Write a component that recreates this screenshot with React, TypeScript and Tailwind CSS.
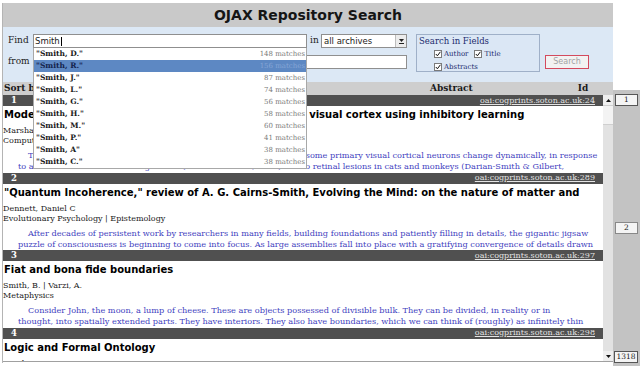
import React from "react";

const serif = "font-['DejaVu_Serif',serif]";
const sans = "font-['DejaVu_Sans',sans-serif]";

const suggestions = [
  { name: '"Smith, D."', count: "148 matches" },
  { name: '"Smith, R."', count: "156 matches", active: true },
  { name: '"Smith, J."', count: "87 matches" },
  { name: '"Smith, L."', count: "74 matches" },
  { name: '"Smith, G."', count: "56 matches" },
  { name: '"Smith, H."', count: "58 matches" },
  { name: '"Smith, M."', count: "60 matches" },
  { name: '"Smith, P."', count: "41 matches" },
  { name: '"Smith, A"', count: "38 matches" },
  { name: '"Smith, C."', count: "38 matches" },
];

const records = [
  {
    n: 1,
    id: "oai:cogprints.soton.ac.uk:24",
    title: "Modelling receptive field plasticity in mature primary visual cortex using inhibitory learning",
    authors: "Marshall, Jonathan A. | Kalarickal, George J.",
    subjects: "Computational Neuroscience | Neural Nets",
    l1: "The receptive field properties of many neurons, including those of some primary visual cortical neurons change dynamically, in response",
    l2: "to artificial scotomas consisting in cats (Pettet & Gilbert, 1992) and to retinal lesions in cats and monkeys (Darian-Smith & Gilbert,",
  },
  {
    n: 2,
    id: "oai:cogprints.soton.ac.uk:289",
    title: '"Quantum Incoherence," review of A. G. Cairns-Smith, Evolving the Mind: on the nature of matter and',
    authors: "Dennett, Daniel C",
    subjects: "Evolutionary Psychology | Epistemology",
    l1: "After decades of persistent work by researchers in many fields, building foundations and patiently filling in details, the gigantic jigsaw",
    l2: "puzzle of consciousness is beginning to come into focus. As large assemblies fall into place with a gratifying convergence of details drawn",
  },
  {
    n: 3,
    id: "oai:cogprints.soton.ac.uk:297",
    title: "Fiat and bona fide boundaries",
    authors: "Smith, B. | Varzi, A.",
    subjects: "Metaphysics",
    l1: "Consider John, the moon, a lump of cheese. These are objects possessed of divisible bulk. They can be divided, in reality or in",
    l2: "thought, into spatially extended parts. They have interiors. They also have boundaries, which we can think of (roughly) as infinitely thin",
  },
  {
    n: 4,
    id: "oai:cogprints.soton.ac.uk:298",
    title: "Logic and Formal Ontology",
    authors: "Smith, B.",
    subjects: "Ontology | Logic",
    l1: "",
    l2: "",
  },
];

function Check() {
  return (
    <span className="flex w-[8px] h-[8px] border border-[#7a7a7a] bg-white items-center justify-center shrink-0">
      <svg width="6" height="6" viewBox="0 0 6 6">
        <path d="M0.8 3 L2.4 4.8 L5.4 0.8" stroke="#111" strokeWidth="1" fill="none" />
      </svg>
    </span>
  );
}

function Record({ r }: { r: (typeof records)[number] }) {
  return (
    <div className="flex flex-col">
      <div className="h-[11px] bg-[#505050] flex items-center justify-between pl-[8px] pr-[8px]">
        <span className={`${serif} text-[8.5px] font-bold text-white leading-none`}>{r.n}</span>
        <span className={`${serif} text-[8px] text-[#e4e4e4] underline leading-none`}>{r.id}</span>
      </div>
      <div className={`${sans} h-[18px] leading-[18px] text-[10px] font-bold text-black whitespace-nowrap overflow-hidden pl-[1px]`}>
        {r.title}
      </div>
      <div className={`${serif} mt-[2px] text-[8px] leading-[10px] text-[#222] whitespace-nowrap`}>{r.authors}</div>
      <div className={`${serif} text-[8px] leading-[10px] text-[#222] whitespace-nowrap`}>{r.subjects}</div>
      <div className={`${serif} mt-[4px] h-[22.5px] overflow-hidden text-[8.2px] leading-[11.25px] text-[#3f3fc0] whitespace-nowrap pr-[3px]`}>
        <div className="pl-[25px] overflow-hidden">{r.l1}</div>
        <div className="pl-[15px] overflow-hidden">{r.l2}</div>
      </div>
    </div>
  );
}

export default function App() {
  return (
    <div className="w-[640px] h-[366px] bg-white overflow-hidden flex">
      {/* main panel */}
      <div className="w-[611px] ml-[2px] mt-[3px] h-[360px] border-l border-[#b4b4b4] flex flex-col">
        {/* header */}
        <div className={`${sans} h-[24px] bg-[#c9c9c9] flex items-center justify-center text-[14px] font-bold text-[#151515]`}>
          OJAX Repository Search
        </div>

        {/* search area */}
        <div className="h-[55px] bg-[#dce8f5] flex pt-[7px] relative z-10">
          <div className="flex flex-col gap-[7px] pl-[5px]">
            <div className="flex items-center h-[14px]">
              <span className={`${serif} w-[25px] text-[9px] text-[#222]`}>Find</span>
              <div className="relative">
                <div className={`${sans} w-[274px] h-[14px] bg-white border border-[#8f8f8f] text-[8.5px] leading-[12px] pl-[1px] text-[#222]`}>
                  Smith<span className="inline-block w-[1px] h-[9px] bg-black align-middle ml-[1px]" />
                </div>
                <div className="absolute left-0 top-[14px] w-[274px] bg-white border border-[#a8a8a8] border-t-0 flex flex-col">
                  {suggestions.map((s) => (
                    <div
                      key={s.name}
                      className={`h-[12px] flex items-center justify-between pl-[2px] pr-[1px] ${s.active ? "bg-[#5d88c3]" : ""}`}
                    >
                      <span className={`${serif} text-[7.5px] font-bold ${s.active ? "text-[#14244d]" : "text-[#1a1a1a]"}`}>{s.name}</span>
                      <span className={`${serif} text-[7px] ${s.active ? "text-[#86a6d6]" : "text-[#7a7a7a]"}`}>{s.count}</span>
                    </div>
                  ))}
                </div>
              </div>
              <span className={`${serif} ml-[3px] w-[11px] text-[9px] text-[#222]`}>in</span>
              <div className={`${sans} w-[86px] h-[14px] bg-white border border-[#8f8f8f] flex items-center justify-between text-[8.5px] text-[#222] pl-[2px]`}>
                <span>all archives</span>
                <span className="w-[11px] h-[12px] bg-[#ececec] border-l border-[#bdbdbd] flex flex-col items-center justify-center gap-[1px]">
                  <svg width="5" height="3" viewBox="0 0 5 3"><path d="M0 0 H5 L2.5 3 Z" fill="#222" /></svg>
                  <span className="w-[5px] h-[1px] bg-[#222]" />
                </span>
              </div>
            </div>
            <div className="flex items-center h-[14px]">
              <span className={`${serif} w-[25px] text-[9px] text-[#222]`}>from</span>
              <div className="w-[374px] h-[14px] bg-white border border-[#8f8f8f]" />
            </div>
          </div>

          <div className="ml-[9px] w-[124px] h-[38px] border border-[#9fb0c8] bg-[#dbe7f5] flex flex-col pl-[2px]">
            <span className={`${serif} text-[8.5px] leading-[13px] text-[#1c2c6e]`}>Search in Fields</span>
            <div className="flex items-center pl-[15px] mt-[1px] h-[10px]">
              <Check />
              <span className={`${serif} text-[7px] text-[#1c2c6e] ml-[2px]`}>Author</span>
              <span className="ml-[6px] flex"><Check /></span>
              <span className={`${serif} text-[7px] text-[#1c2c6e] ml-[2px]`}>Title</span>
            </div>
            <div className="flex items-center pl-[15px] mt-[3px] h-[10px]">
              <Check />
              <span className={`${serif} text-[7px] text-[#1c2c6e] ml-[2px]`}>Abstracts</span>
            </div>
          </div>

          <div className="ml-[5px] mt-[21px] w-[44px] h-[14px] border border-[#d34a5e] bg-[#f2f2f2] flex items-center justify-center">
            <span className={`${sans} text-[8px] text-[#a3a3a3]`}>Search</span>
          </div>
        </div>

        {/* sort row */}
        <div className={`${serif} h-[13px] bg-[#cecece] flex items-center text-[9px] font-bold text-[#1a1a1a]`}>
          <span className="pl-[1px] w-[427px]">Sort by</span>
          <span>Abstract</span>
          <span className="ml-[105px]">Id</span>
        </div>

        {/* list */}
        <div className="h-[267px] flex border-b border-[#a0a0a0]">
          <div className="flex-1 overflow-hidden flex flex-col">
            {records.map((r) => (
              <Record key={r.n} r={r} />
            ))}
          </div>
          {/* scrollbar */}
          <div className="w-[10px] flex flex-col bg-[#e2e2e2]">
            <div className="h-[10px] bg-[#efefef] flex items-center justify-center">
              <svg width="5" height="3" viewBox="0 0 5 3"><path d="M0 3 H5 L2.5 0 Z" fill="#111" /></svg>
            </div>
            <div className="h-[20px] bg-[#f3f3f3] border-y border-[#cfcfcf]" />
            <div className="flex-1" />
            <div className="h-[10px] bg-[#efefef] flex items-center justify-center">
              <svg width="5" height="3" viewBox="0 0 5 3"><path d="M0 0 H5 L2.5 3 Z" fill="#111" /></svg>
            </div>
          </div>
        </div>
      </div>

      {/* right navigator */}
      <div className="flex-1 flex flex-col">
        <div className="h-[90px]" />
        <div className="flex-1 bg-[#c3c3c3] flex flex-col">
          <div className={`${serif} mt-[4px] ml-[2px] w-[23px] h-[12px] bg-[#f4f4f4] border border-[#555] flex items-center justify-center text-[7.5px] text-[#222]`}>1</div>
          <div className={`${serif} mt-[116px] ml-[2px] w-[23px] h-[12px] bg-[#f4f4f4] border border-[#888] flex items-center justify-center text-[7.5px] text-[#222]`}>2</div>
          <div className={`${serif} mt-[117px] ml-[1px] w-[24px] h-[12px] bg-[#f4f4f4] border border-[#555] flex items-center justify-center text-[7.5px] text-[#222]`}>1318</div>
        </div>
      </div>
    </div>
  );
}
